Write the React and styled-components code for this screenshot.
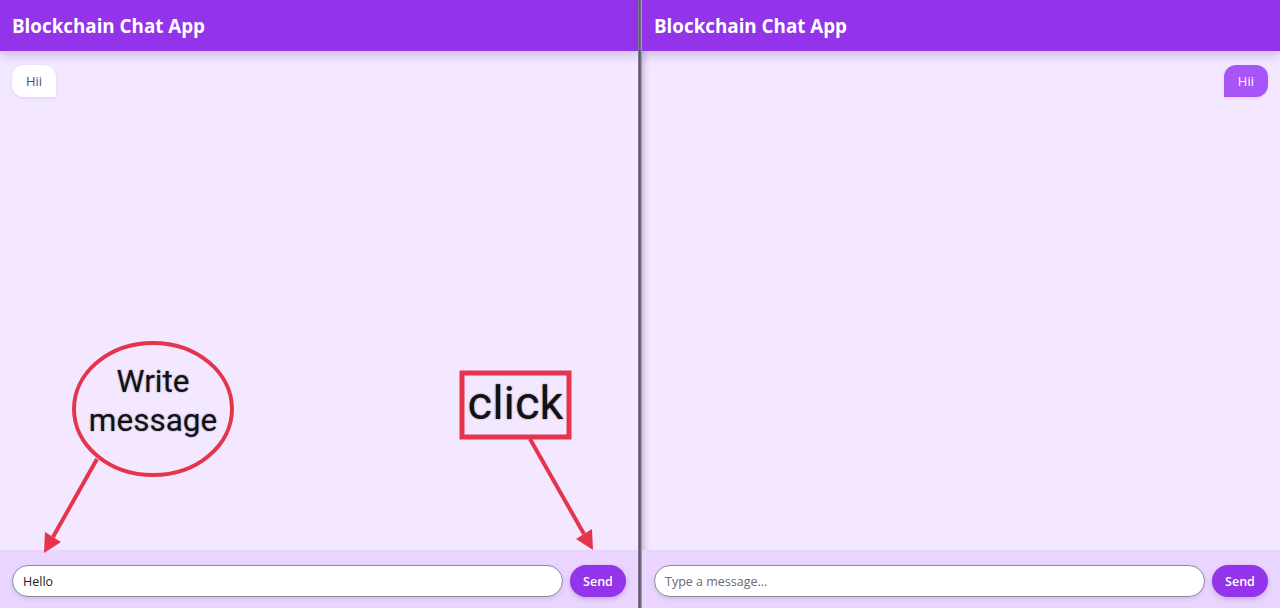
import React from 'react'
import styled, { createGlobalStyle } from 'styled-components'

const GlobalStyle = createGlobalStyle`
  html, body {
    margin: 0;
    padding: 0;
    height: 100%;
    overflow: hidden;
  }
  body {
    font-family: 'Open Sans', 'Liberation Sans', sans-serif;
  }
`

const Page = styled.div`
  display: flex;
  width: 1280px;
  height: 608px;
  background: #f3e8ff;
`

const Panel = styled.div`
  position: relative;
  flex: 1;
  display: flex;
  flex-direction: column;
  height: 608px;
  min-width: 0;
  box-shadow: ${p => (p.right ? 'inset 6px 0 6px -4px rgba(60, 30, 90, 0.25)' : 'none')};
`

const Divider = styled.div`
  width: 4px;
  background: linear-gradient(90deg, #b8a9c9 0, #4f4f5a 25%, #6a6a75 60%, #b9a6cf 100%);
  z-index: 3;
`

const Header = styled.header`
  height: 51px;
  display: flex;
  align-items: center;
  padding: 0 12px;
  background: #9333ea;
  color: #fff;
  font-size: 18.8px;
  font-weight: 700;
  box-shadow: 0 4px 10px rgba(60, 20, 100, 0.22);
  z-index: 2;
`

const Messages = styled.div`
  flex: 1;
  display: flex;
  flex-direction: column;
  align-items: ${p => (p.right ? 'flex-end' : 'flex-start')};
  padding: 14px 12px;
`

const Bubble = styled.div`
  padding: 7px 14px;
  font-size: 13px;
  line-height: 18px;
  border-radius: ${p => (p.mine ? '12px 12px 12px 0' : '12px 12px 0 12px')};
  background: ${p => (p.mine ? '#a855f7' : '#fff')};
  color: ${p => (p.mine ? '#fff' : '#5a4670')};
  box-shadow: 0 1px 3px rgba(80, 40, 120, 0.12);
`

const Footer = styled.form`
  display: flex;
  align-items: center;
  gap: 7px;
  padding: 15px 12px 11px;
  background: #e9d5ff;
`

const Input = styled.input`
  flex: 1;
  height: 32px;
  box-sizing: border-box;
  padding: 0 10px;
  border: 1px solid #8e8a96;
  border-radius: 999px;
  background: #fff;
  font-family: 'Open Sans', 'Liberation Sans', sans-serif;
  font-size: 12.5px;
  color: #222;
  outline: none;
  box-shadow: 0 2px 4px rgba(60, 30, 90, 0.12);
  &::placeholder {
    color: #6b6875;
  }
`

const SendButton = styled.button`
  width: 56px;
  height: 32px;
  border: 0;
  border-radius: 999px;
  background: #9333ea;
  color: #fff;
  font-family: 'Open Sans', 'Liberation Sans', sans-serif;
  font-size: 12.5px;
  font-weight: 600;
  box-shadow: 0 2px 5px rgba(90, 30, 150, 0.25);
`

const Overlay = styled.div`
  position: absolute;
  inset: 0;
  pointer-events: none;
  z-index: 4;
`

const Label = styled.div`
  position: absolute;
  left: ${p => p.x}px;
  top: ${p => p.y}px;
  width: ${p => p.w}px;
  text-align: center;
  font-family: Roboto, 'Liberation Sans', sans-serif;
  font-size: ${p => p.size}px;
  line-height: ${p => p.lh}px;
  color: #111;
  text-shadow: 0 0 2px rgba(0, 0, 0, 0.45);
`

const RED = '#e5354c'

const Annotations = () => (
  <Overlay>
    <svg width='638' height='608' style={{ position: 'absolute', left: 0, top: 0 }}>
      <ellipse cx='153' cy='409' rx='79' ry='66' fill='none' stroke={RED} strokeWidth='4' />
      <line x1='97' y1='459' x2='53' y2='537' stroke={RED} strokeWidth='4' />
      <polygon points='44,553 61,542 45,532' fill={RED} />
      <rect x='462' y='373' width='107' height='64' fill='none' stroke={RED} strokeWidth='5' />
      <line x1='530' y1='439' x2='584' y2='534' stroke={RED} strokeWidth='4' />
      <polygon points='593,550 592,529 576,539' fill={RED} />
    </svg>
    <Label x={73} y={362} w={160} size={31.5} lh={39}>Write<br />message</Label>
    <Label x={462} y={375} w={107} size={47} lh={56}>click</Label>
  </Overlay>
)

const ChatPanel = ({ right, mine, value, children }) => (
  <Panel right={right}>
    <Header>Blockchain Chat App</Header>
    <Messages right={mine}>
      <Bubble mine={mine}>Hii</Bubble>
    </Messages>
    <Footer onSubmit={e => e.preventDefault()}>
      <Input defaultValue={value} placeholder='Type a message...' />
      <SendButton type='submit'>Send</SendButton>
    </Footer>
    {children}
  </Panel>
)

const App = () => (
  <>
    <GlobalStyle />
    <Page>
      <ChatPanel value='Hello'>
        <Annotations />
      </ChatPanel>
      <Divider />
      <ChatPanel right mine value='' />
    </Page>
  </>
)

export default App
